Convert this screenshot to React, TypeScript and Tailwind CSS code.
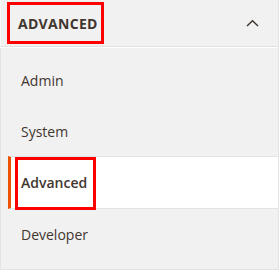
import React from "react";

const items = [
  { label: "Admin", current: false },
  { label: "System", current: false },
  { label: "Advanced", current: true },
  { label: "Developer", current: false },
];

export default function App() {
  return (
    <div
      className="relative w-[280px] h-[275px] bg-white"
      style={{ fontFamily: '"Open Sans", "Liberation Sans", sans-serif' }}
    >
      <div className="w-[279px] border-r border-[#e3e3e3]">
        <div className="h-[47px] bg-[#f1f1f1] border-b border-[#e0e0e0] flex items-center justify-between pl-[17px] pr-[19px] border-l border-l-[#f8f8f8]">
          <span className="text-[14px] font-bold text-[#41362f] tracking-[0.3px] uppercase">
            Advanced
          </span>
          <svg width="13" height="8" viewBox="0 0 13 8" className="mt-[-1px]">
            <polyline
              points="1,7 6.5,1.8 12,7"
              fill="none"
              stroke="#41362f"
              strokeWidth="1.5"
            />
          </svg>
        </div>
        <div className="mt-[1px] bg-[#f1f1f1] border-l border-b border-[#e3e3e3] pt-[7px] pb-[9px] pl-[7px]">
          {items.map((it) =>
            it.current ? (
              <div
                key={it.label}
                className="h-[53px] -mt-[1px] bg-white border-y border-[#e3e3e3] border-l-[3px] border-l-[#eb5202] flex items-center pl-[10px] text-[14px] font-semibold text-[#41362f]"
              >
                {it.label}
              </div>
            ) : (
              <div
                key={it.label}
                className="h-[51px] flex items-center pl-[13px] text-[14px] text-[#41362f]"
              >
                {it.label}
              </div>
            )
          )}
        </div>
      </div>
      <div className="absolute left-[7px] top-[2px] w-[97px] h-[42px] border-[3px] border-[#ff0000]" />
      <div className="absolute left-[15px] top-[157px] w-[81px] h-[53px] border-[3px] border-[#ff0000]" />
    </div>
  );
}
